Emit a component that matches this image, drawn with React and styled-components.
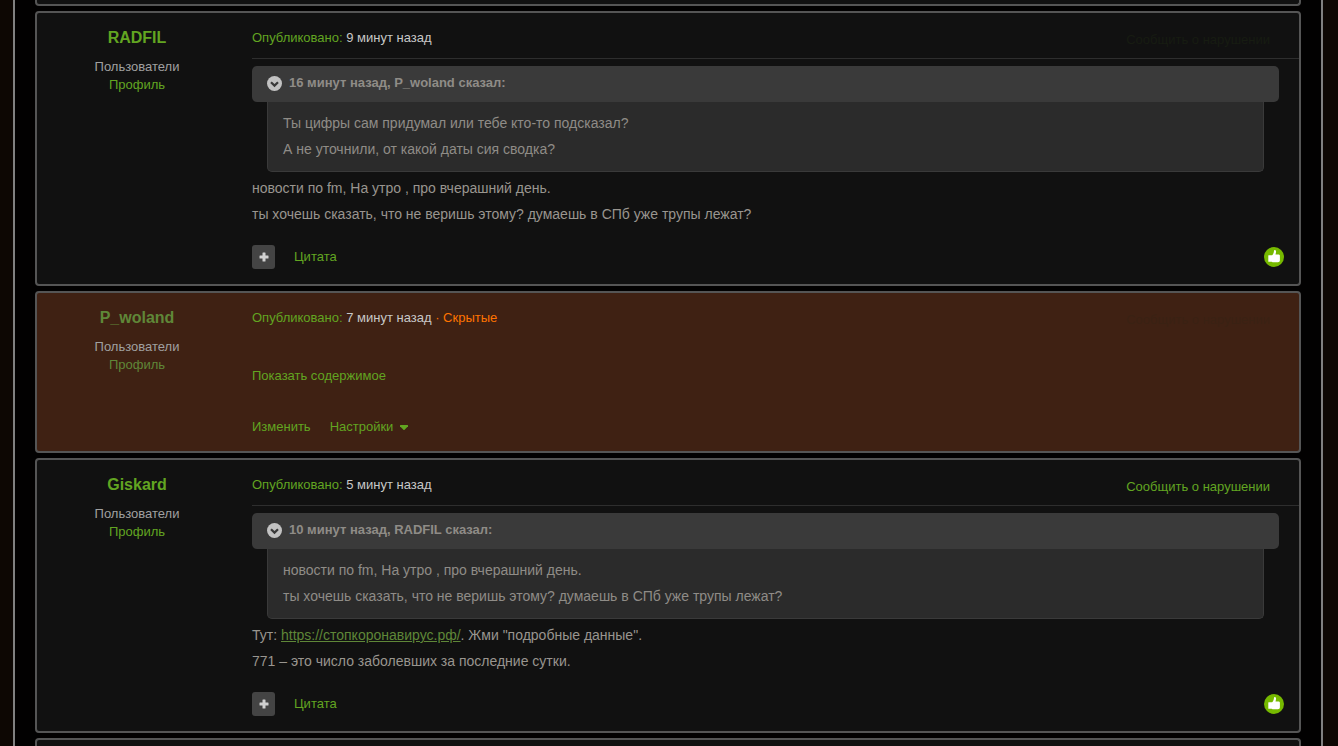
import React from "react";
import styled, { createGlobalStyle, css } from "styled-components";

const posts = [
  {
    id: 1,
    author: "RADFIL",
    time: "9 минут назад",
    quote: {
      title: "16 минут назад, P_woland сказал:",
      lines: [
        "Ты цифры сам придумал или тебе кто-то подсказал?",
        "А не уточнили, от какой даты сия сводка?",
      ],
    },
    lines: [
      "новости по fm, На утро , про вчерашний день.",
      "ты хочешь сказать, что не веришь этому? думаешь в СПб уже трупы лежат?",
    ],
  },
  { id: 2, author: "P_woland", time: "7 минут назад", hidden: true },
  {
    id: 3,
    author: "Giskard",
    time: "5 минут назад",
    reportVisible: true,
    quote: {
      title: "10 минут назад, RADFIL сказал:",
      lines: [
        "новости по fm, На утро , про вчерашний день.",
        "ты хочешь сказать, что не веришь этому? думаешь в СПб уже трупы лежат?",
      ],
    },
    lines: [
      <>
        Тут: <TextLink href="#site">https://стопкоронавирус.рф/</TextLink>. Жми
        "подробные данные".
      </>,
      "771 – это число заболевших за последние сутки.",
    ],
  },
];

function TextLink({ href, children }) {
  return <PostLink href={href}>{children}</PostLink>;
}

const ChevronIcon = () => (
  <svg width="15" height="15" viewBox="0 0 15 15">
    <path d="M4 6.2 7.5 9.6 11 6.2" fill="none" stroke="currentColor" strokeWidth="2.2" />
  </svg>
);

const PlusIcon = () => (
  <svg width="10" height="10" viewBox="0 0 10 10">
    <path
      d="M3.5 1q0-.5.5-.5h2q.5 0 .5.5v2.5H9q.5 0 .5.5v2q0 .5-.5.5H6.5V9q0 .5-.5.5H4q-.5 0-.5-.5V6.5H1q-.5 0-.5-.5V4q0-.5.5-.5h2.5z"
      fill="currentColor"
    />
  </svg>
);

const CaretIcon = () => (
  <svg width="8" height="5" viewBox="0 0 8 5">
    <path d="M.5 0h7q.5 0 .5.6v.6L4.6 4.7q-.6.5-1.2 0L0 1.2V.6Q0 0 .5 0z" fill="currentColor" />
  </svg>
);

const ThumbIcon = () => (
  <svg width="20" height="20" viewBox="0 0 20 20">
    <path
      d="M4.3 8.6q0-.4.4-.4h3.4c1.2-1.3 1.6-2.2 1.8-3.8.1-1.2.5-1.5 1-1.5 1 0 1.3 1.2 1.1 2.3L11.5 7.4h2.9c1 0 1.5.6 1.5 1.4v4.4c0 1.3-.7 2-2 2H8.6l-1-.4H4.7q-.4 0-.4-.4z"
      fill="#fff"
    />
  </svg>
);

const Author = ({ name, muted }) => (
  <AuthorPane>
    <AuthorName>
      <UserLink href="#user" $muted={muted}>
        {name}
      </UserLink>
    </AuthorName>
    <Group>Пользователи</Group>
    <UserLink href="#profile" $muted={muted}>
      Профиль
    </UserLink>
  </AuthorPane>
);

const Quote = ({ title, lines }) => (
  <QuoteBox>
    <QuoteTitle>
      <QuoteToggle type="button" aria-label="Свернуть цитату">
        <ChevronIcon />
      </QuoteToggle>
      {title}
    </QuoteTitle>
    <QuoteBody>
      {lines.map((line) => (
        <p key={line}>{line}</p>
      ))}
    </QuoteBody>
  </QuoteBox>
);

const Post = ({ post }) => (
  <Card $hidden={post.hidden}>
    <Author name={post.author} muted={post.hidden} />
    <Content>
      <Meta $plain={post.hidden}>
        <span>
          <GreenLink href="#post">Опубликовано:</GreenLink>{" "}
          <time>{post.time}</time>
          {post.hidden && <HiddenMark> · Скрытые</HiddenMark>}
        </span>
        <ReportLink href="#report" $visible={post.reportVisible} $hidden={post.hidden}>
          Сообщить о нарушении
        </ReportLink>
      </Meta>

      {post.hidden ? (
        <>
          <ShowContent>
            <GreenLink href="#show">Показать содержимое</GreenLink>
          </ShowContent>
          <Actions>
            <GreenLink href="#edit">Изменить</GreenLink>
            <MenuButton type="button">
              Настройки <CaretIcon />
            </MenuButton>
          </Actions>
        </>
      ) : (
        <>
          <Quote {...post.quote} />
          <Text>
            {post.lines.map((line, i) => (
              <p key={i}>{line}</p>
            ))}
          </Text>
          <Controls>
            <MultiQuote type="button" aria-label="Мультицитата">
              <PlusIcon />
            </MultiQuote>
            <GreenLink href="#quote">Цитата</GreenLink>
            <Like type="button" aria-label="Нравится">
              <ThumbIcon />
            </Like>
          </Controls>
        </>
      )}
    </Content>
  </Card>
);

const App = () => (
  <>
    <GlobalStyle />
    <Page>
      <PrevPost />
      {posts.map((post) => (
        <Post key={post.id} post={post} />
      ))}
      <NextPost />
    </Page>
  </>
);

const GlobalStyle = createGlobalStyle`
  * {
    box-sizing: border-box;
  }
  body {
    margin: 0;
    background: #0d0703;
    color: #a0a0a0;
    font: 13px/18px "Liberation Sans", Arial, sans-serif;
  }
  p {
    margin: 0;
  }
  a {
    text-decoration: none;
  }
  button {
    padding: 0;
    border: 0;
    background: none;
    font: inherit;
    cursor: pointer;
  }
  svg {
    display: block;
  }
`;

const Page = styled.main`
  display: flex;
  flex-direction: column;
  gap: 5px;
  min-height: 100vh;
  margin: 0 15px 0 13px;
  padding: 0 20px;
  background: #020101;
  border: solid #808080;
  border-width: 0 2px;
`;

const frame = css`
  background: #111;
  border: 2px solid #555;
  border-radius: 4px;
`;

const PrevPost = styled.div`
  ${frame}
  height: 6px;
  border-top: 0;
  border-top-left-radius: 0;
  border-top-right-radius: 0;
`;

const NextPost = styled.div`
  ${frame}
  flex: 1;
  border-bottom: 0;
  border-bottom-left-radius: 0;
  border-bottom-right-radius: 0;
`;

const Card = styled.article`
  ${frame}
  display: grid;
  grid-template-columns: 200px 1fr;
  ${({ $hidden }) => $hidden && "background: #3f2113;"}
`;

const AuthorPane = styled.aside`
  padding-top: 15px;
  text-align: center;
`;

const AuthorName = styled.h3`
  margin: 0 0 10px;
  font-size: 16px;
  line-height: 20px;
`;

const Group = styled.div`
  color: #a0a0a0;
`;

const UserLink = styled.a`
  color: ${({ $muted }) => ($muted ? "#5f8738" : "#62a521")};
`;

const GreenLink = styled.a`
  color: #62a521;
`;

const Content = styled.div`
  padding-left: 15px;
`;

const Meta = styled.header`
  display: flex;
  justify-content: space-between;
  height: 46px;
  padding: 16px 29px 0 0;
  border-bottom: 1px solid ${({ $plain }) => ($plain ? "transparent" : "#2e2e2e")};

  time {
    color: #c8c8c8;
  }
`;

const HiddenMark = styled.span`
  color: #ff7300;
`;

const ReportLink = styled.a`
  padding-top: 2px;
  color: ${({ $visible, $hidden }) =>
    $visible ? "#62a521" : $hidden ? "#3a2213" : "#171c12"};
`;

const QuoteBox = styled.blockquote`
  margin: 7px 20px 0 0;
  color: #8f8c87;
`;

const QuoteTitle = styled.div`
  display: flex;
  align-items: center;
  gap: 7px;
  height: 36px;
  padding: 0 15px 2px;
  background: #3a3a3a;
  border-radius: 5px;
  font-weight: bold;
`;

const QuoteToggle = styled.button`
  width: 15px;
  height: 15px;
  border-radius: 50%;
  background: #c2c2c2;
  color: #3a3a3a;
`;

const QuoteBody = styled.div`
  margin: 0 15px;
  padding: 8px 15px 9px;
  background: #2b2b2b;
  border: 1px solid #3a3a3a;
  border-top: 0;
  border-radius: 0 0 5px 5px;
  font-size: 14px;
  line-height: 26px;
`;

const Text = styled.div`
  padding: 3px 20px 0 0;
  color: #99958f;
  font-size: 14px;
  line-height: 26px;
`;

const PostLink = styled.a`
  color: #5f8738;
  text-decoration: underline;
`;

const Controls = styled.footer`
  display: flex;
  align-items: center;
  gap: 19px;
  padding: 18px 15px 15px 0;
`;

const MultiQuote = styled.button`
  display: grid;
  place-items: center;
  width: 23px;
  height: 24px;
  border-radius: 3px;
  background: #444;
  color: #d0d0d0;
`;

const Like = styled.button`
  width: 20px;
  height: 20px;
  margin-left: auto;
  border-radius: 50%;
  background: #76b900;
`;

const ShowContent = styled.div`
  padding-top: 28px;
`;

const Actions = styled.footer`
  display: flex;
  gap: 19px;
  padding: 33px 0 15px;
`;

const MenuButton = styled.button`
  display: flex;
  align-items: center;
  gap: 7px;
  color: #62a521;
`;

export default App;
